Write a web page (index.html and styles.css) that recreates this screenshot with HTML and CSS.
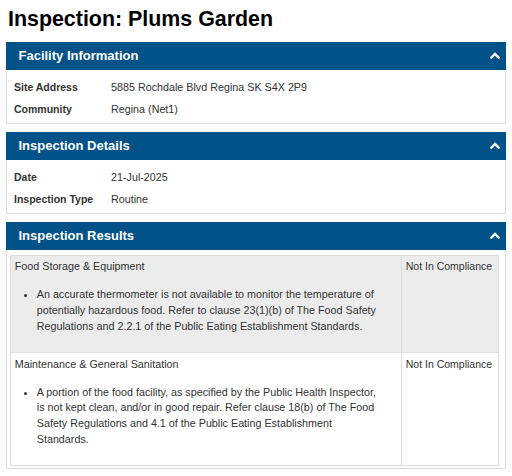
FILE: index.html
```html
<!DOCTYPE html>
<html lang="en">
<head>
<meta charset="utf-8">
<title>Inspection: Plums Garden</title>
<link rel="stylesheet" href="styles.css">
</head>
<body>
<div class="page">
  <h1 class="title">Inspection: Plums Garden</h1>

  <section class="panel">
    <div class="panel-heading">
      <span class="panel-title">Facility Information</span>
      <svg class="chev" width="10" height="7" viewBox="0 0 10 7"><polyline points="1.4,5.6 5,2 8.6,5.6" fill="none" stroke="#fff" stroke-width="2.4" stroke-linecap="square"/></svg>
    </div>
    <div class="panel-body">
      <div class="info-row"><div class="label">Site Address</div><div class="value">5885 Rochdale Blvd Regina SK S4X 2P9</div></div>
      <div class="info-row"><div class="label">Community</div><div class="value">Regina (Net1)</div></div>
    </div>
  </section>

  <section class="panel">
    <div class="panel-heading">
      <span class="panel-title">Inspection Details</span>
      <svg class="chev" width="10" height="7" viewBox="0 0 10 7"><polyline points="1.4,5.6 5,2 8.6,5.6" fill="none" stroke="#fff" stroke-width="2.4" stroke-linecap="square"/></svg>
    </div>
    <div class="panel-body">
      <div class="info-row"><div class="label">Date</div><div class="value">21-Jul-2025</div></div>
      <div class="info-row"><div class="label">Inspection Type</div><div class="value">Routine</div></div>
    </div>
  </section>

  <section class="panel">
    <div class="panel-heading">
      <span class="panel-title">Inspection Results</span>
      <svg class="chev" width="10" height="7" viewBox="0 0 10 7"><polyline points="1.4,5.6 5,2 8.6,5.6" fill="none" stroke="#fff" stroke-width="2.4" stroke-linecap="square"/></svg>
    </div>
    <div class="panel-body results-body">
      <table class="results">
        <colgroup><col class="col-desc"><col class="col-status"></colgroup>
        <tr class="striped">
          <td>
            <div class="category">Food Storage &amp; Equipment</div>
            <ul class="findings">
              <li>An accurate thermometer is not available to monitor the temperature of potentially hazardous food. Refer to clause 23(1)(b) of The Food Safety Regulations and 2.2.1 of the Public Eating Establishment Standards.</li>
            </ul>
          </td>
          <td class="status">Not In Compliance</td>
        </tr>
        <tr>
          <td>
            <div class="category">Maintenance &amp; General Sanitation</div>
            <ul class="findings">
              <li>A portion of the food facility, as specified by the Public Health Inspector, is not kept clean, and/or in good repair. Refer clause 18(b) of The Food Safety Regulations and 4.1 of the Public Eating Establishment Standards.</li>
            </ul>
          </td>
          <td class="status">Not In Compliance</td>
        </tr>
      </table>
    </div>
  </section>
</div>
</body>
</html>
```

FILE: styles.css
```css
html, body {
  margin: 0;
  padding: 0;
  background: #fff;
}

body {
  font-family: "Liberation Sans", Arial, sans-serif;
  font-size: 10.75px;
  color: #333;
}

.page {
  padding: 8px 6px 0 6px;
}

.title {
  margin: 0 0 11px 0;
  padding-left: 2px;
  font-size: 21.4px;
  line-height: 23px;
  font-weight: bold;
  color: #000;
}

.panel {
  border: 1px solid #dddddd;
  border-top: 0;
  margin-bottom: 8px;
  background: #fff;
}

.panel-heading {
  display: flex;
  align-items: center;
  justify-content: space-between;
  height: 27.5px;
  margin: 0 -1px;
  padding: 0 6px 0 12.5px;
  background: #015289;
  color: #fff;
}

.panel-title {
  font-size: 13px;
  font-weight: bold;
}

.chev {
  display: block;
}

.panel-body {
  padding: 6.5px 7px 3px 7px;
}

.info-row {
  display: flex;
  line-height: 22px;
}

.label {
  width: 97px;
  flex: none;
  font-weight: bold;
  font-size: 10.5px;
}

.value {
  flex: 1;
}

.results-body {
  padding: 5px 7px 2px 3px;
}

.results {
  width: 488px;
  border-collapse: collapse;
  table-layout: fixed;
}

.col-desc {
  width: 391px;
}

.col-status {
  width: 97px;
}

.results td {
  border: 1px solid #dddddd;
  padding: 3.75px;
  vertical-align: top;
  line-height: 15.75px;
}

.results tr.striped td {
  background: #ececec;
}

.findings {
  margin: 12px 17px 14px 0;
  padding-left: 22px;
}

.status {
  padding-left: 4.5px;
  font-size: 10.5px;
}
```
